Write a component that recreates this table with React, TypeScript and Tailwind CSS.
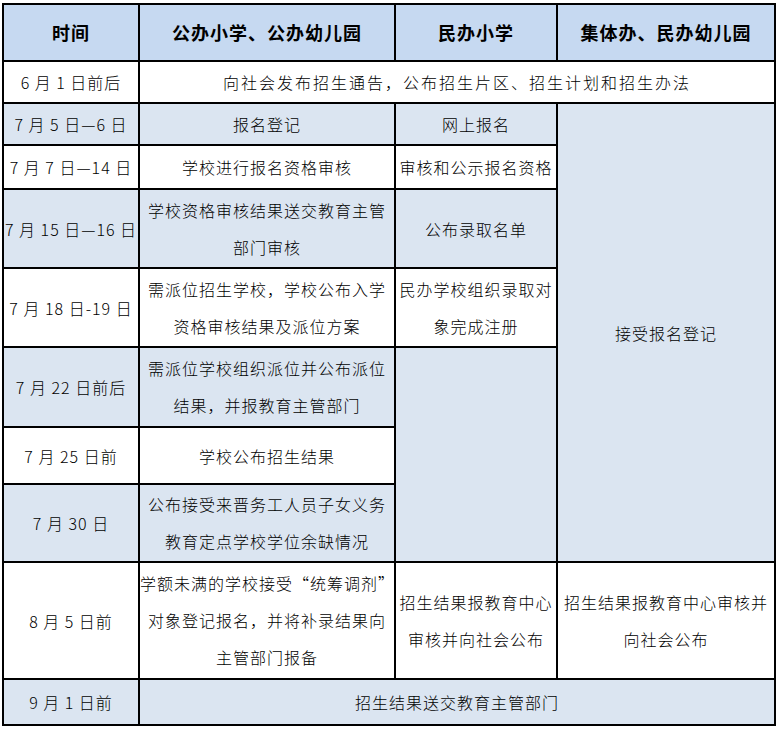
const cell = "border-2 border-black text-center align-middle p-0 overflow-visible";
const shade = "bg-[#dbe5f1]";
const white = "bg-white";
const head = "bg-[#c6d9f1]";

function Lines({ lines }: { lines: string[] }) {
  return (
    <div className="leading-[37px]">
      {lines.map((l) => (
        <div key={l} className="whitespace-nowrap">
          {l}
        </div>
      ))}
    </div>
  );
}

export default function App() {
  return (
    <div
      className="w-[777px] h-[729px] bg-white text-black text-[16px] tracking-[1px] font-light"
      style={{ fontFamily: '"Noto Sans CJK SC", "Noto Sans", sans-serif' }}
    >
      <table className="table-fixed border-collapse ml-[2px] mt-[3px] w-[772px]">
        <colgroup>
          <col className="w-[136px]" />
          <col className="w-[256px]" />
          <col className="w-[162px]" />
          <col className="w-[218px]" />
        </colgroup>
        <tbody>
          {/* header */}
          <tr className="h-[57px]">
            <td className={`${cell} ${head} text-[18px] font-bold`}>时间</td>
            <td className={`${cell} ${head} text-[18px] font-bold`}>公办小学、公办幼儿园</td>
            <td className={`${cell} ${head} text-[18px] font-bold`}>民办小学</td>
            <td className={`${cell} ${head} text-[18px] font-bold`}>集体办、民办幼儿园</td>
          </tr>

          <tr className="h-[42px]">
            <td className={`${cell} ${white}`}>6 月 1 日前后</td>
            <td colSpan={3} className={`${cell} ${white} tracking-[2px]`}>
              向社会发布招生通告，公布招生片区、招生计划和招生办法
            </td>
          </tr>

          <tr className="h-[42px]">
            <td className={`${cell} ${shade}`}>7 月 5 日—6 日</td>
            <td className={`${cell} ${shade}`}>报名登记</td>
            <td className={`${cell} ${shade}`}>网上报名</td>
            <td rowSpan={7} className={`${cell} ${shade}`}>接受报名登记</td>
          </tr>

          <tr className="h-[44px]">
            <td className={`${cell} ${white}`}>7 月 7 日—14 日</td>
            <td className={`${cell} ${white}`}>学校进行报名资格审核</td>
            <td className={`${cell} ${white}`}>审核和公示报名资格</td>
          </tr>

          <tr className="h-[79px]">
            <td className={`${cell} ${shade}`}>7 月 15 日—16 日</td>
            <td className={`${cell} ${shade}`}>
              <Lines lines={["学校资格审核结果送交教育主管", "部门审核"]} />
            </td>
            <td className={`${cell} ${shade}`}>公布录取名单</td>
          </tr>

          <tr className="h-[79px]">
            <td className={`${cell} ${white}`}>7 月 18 日-19 日</td>
            <td className={`${cell} ${white}`}>
              <Lines lines={["需派位招生学校，学校公布入学", "资格审核结果及派位方案"]} />
            </td>
            <td className={`${cell} ${white}`}>
              <Lines lines={["民办学校组织录取对", "象完成注册"]} />
            </td>
          </tr>

          <tr className="h-[80px]">
            <td className={`${cell} ${shade}`}>7 月 22 日前后</td>
            <td className={`${cell} ${shade}`}>
              <Lines lines={["需派位学校组织派位并公布派位", "结果，并报教育主管部门"]} />
            </td>
            <td rowSpan={3} className={`${cell} ${shade}`}></td>
          </tr>

          <tr className="h-[57px]">
            <td className={`${cell} ${white}`}>7 月 25 日前</td>
            <td className={`${cell} ${white}`}>学校公布招生结果</td>
          </tr>

          <tr className="h-[78px]">
            <td className={`${cell} ${shade}`}>7 月 30 日</td>
            <td className={`${cell} ${shade}`}>
              <Lines lines={["公布接受来晋务工人员子女义务", "教育定点学校学位余缺情况"]} />
            </td>
          </tr>

          <tr className="h-[117px]">
            <td className={`${cell} ${white}`}>8 月 5 日前</td>
            <td className={`${cell} ${white}`}>
              <Lines
                lines={["学额未满的学校接受“统筹调剂”", "对象登记报名，并将补录结果向", "主管部门报备"]}
              />
            </td>
            <td className={`${cell} ${white}`}>
              <Lines lines={["招生结果报教育中心", "审核并向社会公布"]} />
            </td>
            <td className={`${cell} ${white}`}>
              <Lines lines={["招生结果报教育中心审核并", "向社会公布"]} />
            </td>
          </tr>

          <tr className="h-[46px]">
            <td className={`${cell} ${shade}`}>9 月 1 日前</td>
            <td colSpan={3} className={`${cell} ${shade}`}>
              招生结果送交教育主管部门
            </td>
          </tr>
        </tbody>
      </table>
    </div>
  );
}
